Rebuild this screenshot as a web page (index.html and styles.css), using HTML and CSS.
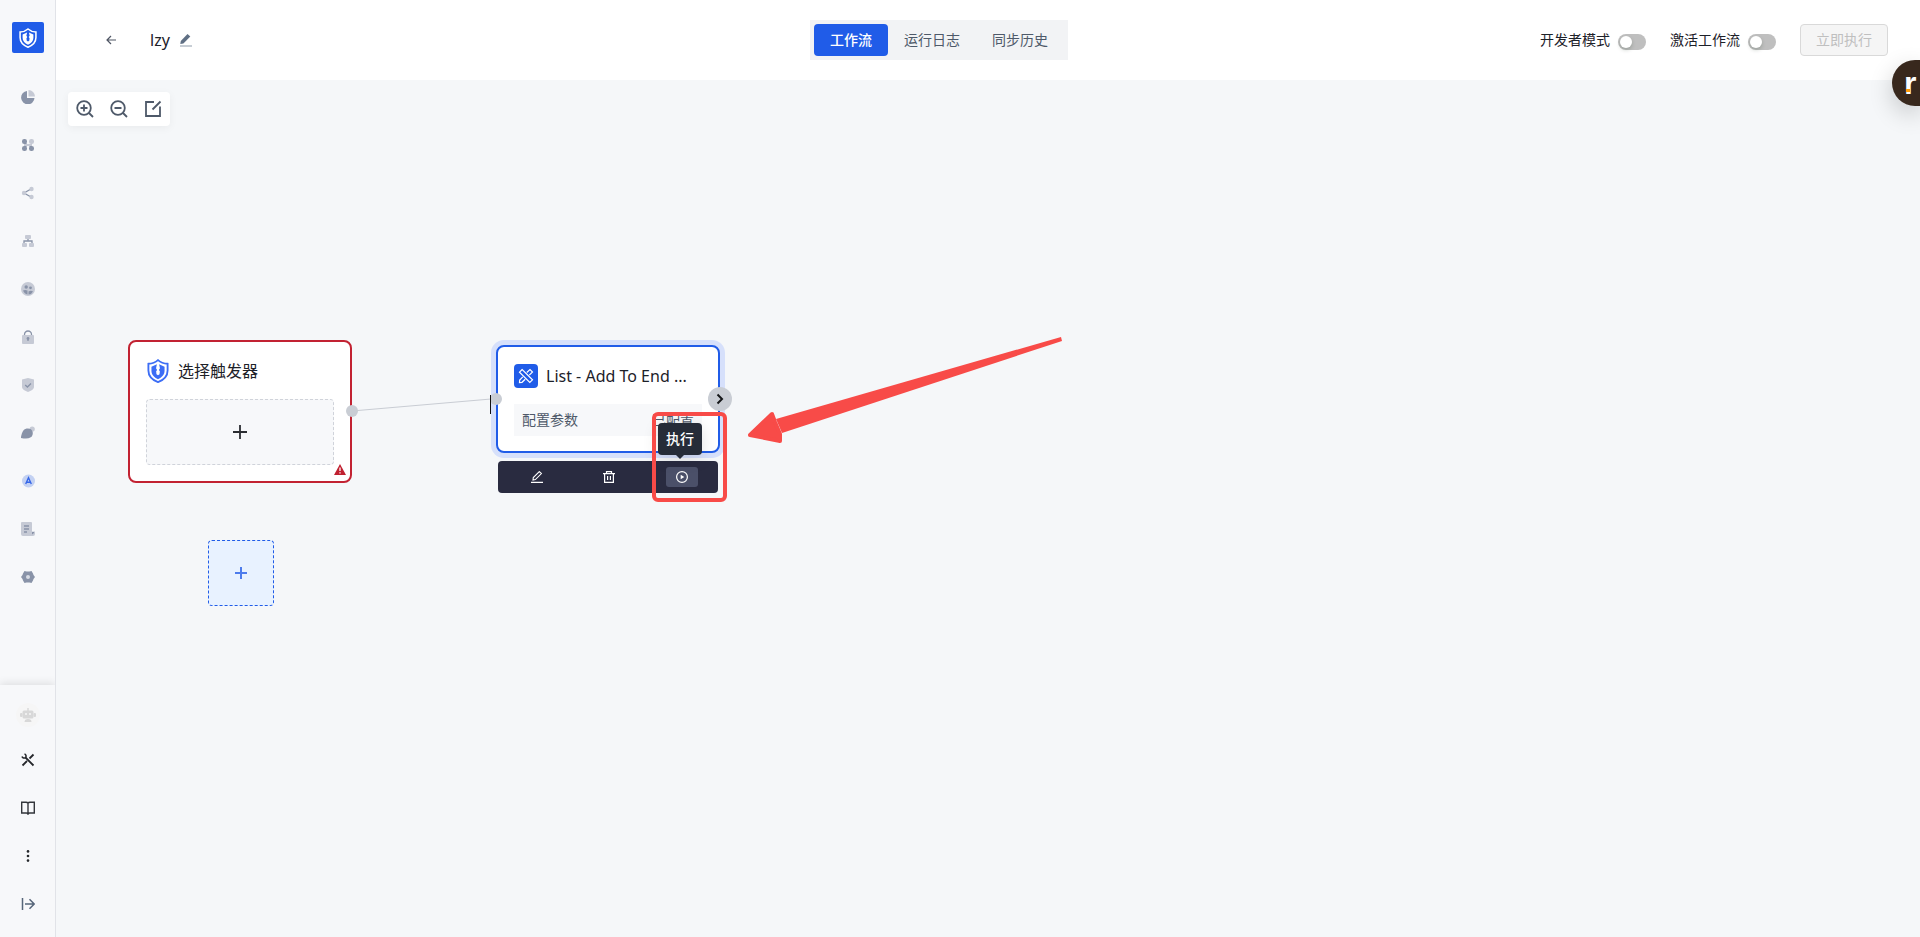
FILE: index.html
```html
<!DOCTYPE html>
<html lang="zh-CN">
<head>
<meta charset="utf-8">
<title>lzy - 工作流</title>
<link rel="stylesheet" href="styles.css">
</head>
<body>
<svg class="defs" aria-hidden="true">
  <symbol id="shield" viewBox="0 0 20 22">
    <path d="M10 1 C7.500 3.200 4.500 4.200 1.200 4.400 V10.500 C1.200 15.800 4.800 19.200 10 21.200 C15.200 19.200 18.800 15.800 18.800 10.500 V4.400 C15.500 4.200 12.500 3.200 10 1Z" fill="none" stroke="currentColor" stroke-width="1.700"/>
    <path d="M4 7.200 L9 4.800 L8.200 8.500 L9.200 10 L8.300 11.200 L8.600 14 L10 15 L11.400 14 L11.700 11.200 L10.800 10 L11.800 8.500 L11 4.800 L16 7.200 V11 C16 14.200 13.500 17 10 18.500 C6.500 17 4 14.200 4 11Z" fill="currentColor"/>
  </symbol>
</svg>
<div class="app">
  <aside class="sidebar">
    <a class="logo" href="#" aria-label="首页"><svg width="18" height="20"><use href="#shield"/></svg></a>
    <nav class="nav" aria-label="主导航">
      <a class="nav-item" href="#" aria-label="概览"><svg viewBox="0 0 14 14"><path class="dark" d="M6 1V8H13.500A6.700 6.700 0 1 1 6 1Z"/><path class="soft" d="M7.500 0A6.500 6.500 0 0 1 14 6.500H7.500Z"/></svg></a>
      <a class="nav-item" href="#" aria-label="应用"><svg viewBox="0 0 14 14"><path class="soft" d="M3 6h8v2H3z"/><rect class="dark" x="1" y="1" width="5" height="5" rx="2.200"/><rect class="soft" x="8" y="1" width="5" height="5" rx="2.200"/><rect class="dark" x="1" y="8" width="5" height="5" rx="2.200"/><rect class="dark" x="8" y="8" width="5" height="5" rx="2.200"/><path class="dark" d="M4 4l2 2H4zM4 10l2-2H4zM10 10L8 8h2z"/></svg></a>
      <a class="nav-item" href="#" aria-label="工作流"><svg viewBox="0 0 14 14"><path class="dark-line" d="M10 3L3 7l7 4"/><circle class="soft" cx="10.500" cy="3" r="2.200"/><circle class="soft" cx="3" cy="7" r="2.200"/><circle class="soft" cx="10.500" cy="11" r="2.200"/></svg></a>
      <a class="nav-item" href="#" aria-label="组织"><svg viewBox="0 0 14 14"><path class="dark-line" d="M7 5v2M3 10V7h8v3"/><rect class="soft" x="4" y="1" width="6" height="4" rx="1"/><rect class="soft" x="1" y="9" width="5" height="4" rx="1"/><rect class="soft" x="8" y="9" width="5" height="4" rx="1"/></svg></a>
      <a class="nav-item" href="#" aria-label="用户"><svg viewBox="0 0 14 14"><circle class="soft" cx="7" cy="7" r="7"/><circle class="dark" cx="5.200" cy="5" r="1.700"/><circle class="dark" cx="9.500" cy="5.800" r="1.400"/><path class="dark" d="M2 8.500Q4 7.500 6.500 8.500V12.500Q3.500 12 2 8.500ZM7.500 9.500Q10 8 12 9.500Q11 12 7.500 12.500Z"/></svg></a>
      <a class="nav-item" href="#" aria-label="权限"><svg viewBox="0 0 14 14"><path class="dark-line" d="M3.500 6V4.500a3.500 3.500 0 0 1 7 0V6"/><rect class="soft" x="1" y="5" width="12" height="9" rx="1"/><path class="dark-line" d="M7 11V8"/><circle class="dark" cx="7" cy="8.500" r="1.400"/></svg></a>
      <a class="nav-item" href="#" aria-label="安全"><svg viewBox="0 0 14 14"><path class="soft" d="M7 0l6 1.500v7.500c0 2-3 4-6 5c-3-1-6-3-6-5V1.500Z"/><path class="dark-line" d="M4.200 7l2.200 2L10 5.500"/></svg></a>
      <a class="nav-item" href="#" aria-label="品牌"><svg viewBox="0 0 14 14"><circle class="soft" cx="11.200" cy="3" r="2.600"/><path class="dark" d="M0 11C1 5 3 2.500 7 2.500C11 2.500 12.500 6 11.500 9C10.500 12 7 13.500 0 12Z"/></svg></a>
      <a class="nav-item" href="#" aria-label="自动化"><svg viewBox="0 0 14 14"><circle cx="7.500" cy="7" r="6.500" fill="#c3d1f2"/><path d="M4.700 10L7.500 3.800L10.300 10M5.500 8.200h4" fill="none" stroke="#3566e8" stroke-width="1.400"/></svg></a>
      <a class="nav-item" href="#" aria-label="日志"><svg viewBox="0 0 14 14"><path class="soft" d="M1 0h9q1 0 1 1v8.500h3V12q0 2-2 2H2q-2 0-2-2V1q0-1 1-1Z"/><path class="dark-line" d="M3 4h5M3 7h5M3 10h3"/><path class="dark" d="M11 10h2v1l-2 1.500Z"/></svg></a>
      <a class="nav-item" href="#" aria-label="设置"><svg viewBox="0 0 14 14"><path class="dark" d="M3.500 1L5.500 1.500h3l2-.5L12 3.500 12.500 5 14 7l-1.500 2L12 10.500 10.500 13l-2-.5h-3l-2 .5L2 10.500 1.500 9 0 7l1.500-2L2 3.500Z"/><circle cx="7" cy="7" r="2" fill="#d9dde5"/></svg></a>
    </nav>
    <div class="side-foot">
      <a class="robot" href="#" aria-label="助手"><svg viewBox="0 0 16 16"><path d="M8 1v3" stroke="#dadada" stroke-width="1.500"/><rect x="2.500" y="3.500" width="11" height="8" rx="1.500" fill="#d8d8d8"/><rect x="0" y="6" width="2.500" height="4" rx="1" fill="#d8d8d8"/><rect x="13.500" y="6" width="2.500" height="4" rx="1" fill="#d8d8d8"/><circle cx="6" cy="7" r="1" fill="#f7f7f7"/><circle cx="10" cy="7" r="1" fill="#f7f7f7"/><path d="M4.500 15q0-3 3.500-3t3.500 3Z" fill="#d8d8d8"/></svg></a>
      <a class="nav-item" href="#" aria-label="工具"><svg viewBox="0 0 14 14" fill="none" stroke="#25272b" stroke-width="1.800"><path d="M4.500 4.500L12.500 12.500M1.500 12.500L6 8M8.500 5.500L12.500 1.500"/><path d="M1 3.500A2.200 2.200 0 0 0 4.500 4.600A2.200 2.200 0 0 0 3.500 1" stroke-width="1.500"/></svg></a>
      <a class="nav-item" href="#" aria-label="文档"><svg viewBox="0 0 14 14" fill="none" stroke="#33363b" stroke-width="1.400"><path d="M7 2.200Q6.500 1.200 5 1.200H.7V12H5.500Q6.700 12 7 13.500Q7.300 12 8.500 12H13.300V1.200H9Q7.500 1.200 7 2.200ZM7 2V13"/></svg></a>
      <a class="nav-item" href="#" aria-label="更多"><svg viewBox="0 0 14 14" fill="#25272b"><circle cx="7" cy="2.400" r="1.300"/><circle cx="7" cy="7" r="1.300"/><circle cx="7" cy="11.600" r="1.300"/></svg></a>
      <a class="nav-item" href="#" aria-label="展开"><svg viewBox="0 0 14 14" fill="none" stroke="#566579" stroke-width="1.500"><path d="M1.500 1v12M4 7h9M8.500 2.200L13.200 7L8.500 11.800"/></svg></a>
    </div>
  </aside>
  <div class="page">
    <header class="header">
      <div class="heading">
        <button class="icon-btn back" aria-label="返回"><svg width="10" height="10" viewBox="0 0 10 10" fill="none" stroke="#4f5664" stroke-width="1.200"><path d="M10 5H1M5 1L1 5L5 9"/></svg></button>
        <h1>lzy</h1>
        <button class="icon-btn rename" aria-label="重命名"><svg width="12" height="14" viewBox="0 0 12 14"><path d="M.3 11L.8 8L7.500 1L10.300 3.600L3.400 10.600Z" fill="#5f6f84"/><path d="M0 13h12" stroke="#8f9cab"/></svg></button>
      </div>
      <div class="tabs" role="tablist">
        <button class="tab active" role="tab" aria-selected="true">工作流</button>
        <button class="tab" role="tab">运行日志</button>
        <button class="tab" role="tab">同步历史</button>
      </div>
      <div class="actions">
        <label>开发者模式<input class="switch" type="checkbox" role="switch"></label>
        <label>激活工作流<input class="switch" type="checkbox" role="switch"></label>
        <button class="run" disabled>立即执行</button>
      </div>
    </header>
    <main class="canvas">
      <div class="zoom-bar">
        <button class="icon-btn" aria-label="放大"><svg width="18" height="18" viewBox="0 0 18 18" fill="none" stroke="#4e5969" stroke-width="1.800"><circle cx="8" cy="8" r="6.800"/><path d="M13 13l4 4M4.500 8h7M8 4.500v7"/></svg></button>
        <button class="icon-btn" aria-label="缩小"><svg width="18" height="18" viewBox="0 0 18 18" fill="none" stroke="#4e5969" stroke-width="1.800"><circle cx="8" cy="8" r="6.800"/><path d="M13 13l4 4M4.500 8h7"/></svg></button>
        <button class="icon-btn" aria-label="适应画布"><svg width="18" height="18" viewBox="0 0 18 18" fill="none" stroke="#4e5969" stroke-width="1.800"><path d="M10 2H2V16H16V6.500M8.500 9.500L16.500 1.500"/></svg></button>
      </div>

      <svg class="edge" width="150" height="40"><path d="M6 21L145 9" stroke="#c9cdd4"/></svg>

      <section class="node trigger">
        <div class="node-title"><svg class="shield" width="24" height="24"><use href="#shield"/></svg><h2>选择触发器</h2></div>
        <button class="slot" aria-label="添加触发器"><svg width="16" height="16" viewBox="0 0 16 16" stroke="#2b2d31" stroke-width="1.800"><path d="M1 8h14M8 1v14"/></svg></button>
        <svg class="warn" width="12" height="11" viewBox="0 0 12 11"><path d="M6 0L12 11H0Z" fill="#c02030"/><path d="M6 3.500v3.500M6 8.200v1.300" stroke="#fff" stroke-width="1.300"/></svg>
        <i class="port out"></i>
      </section>

      <button class="add-node" aria-label="添加节点"><svg width="12" height="12" viewBox="0 0 12 12" stroke="#4d7cec" stroke-width="2"><path d="M0 6h12M6 0v12"/></svg></button>

      <section class="node list">
        <div class="node-title"><span class="tool-icon"><svg width="16" height="16" viewBox="0 0 16 16" fill="none" stroke="#fff" stroke-width="1.200"><path d="M8.800 4.500L12 1.500L14.500 4L11.300 7.200M7.200 11.300L4 14.300L1.500 14.500L1.700 12L4.800 8.800"/><path d="M4.200 1.500L1.500 4.200L11.800 14.500L14.500 11.800Z"/></svg></span><h2>List - Add To End ...</h2></div>
        <div class="param"><span>配置参数</span><span>已配置</span></div>
        <i class="port in"></i>
        <button class="next" aria-label="展开"><svg width="8" height="12" viewBox="0 0 8 12" fill="none" stroke="#15171a" stroke-width="2"><path d="M1.500 1.500L6 6L1.500 10.500"/></svg></button>
      </section>
      <i class="edge-end"></i>

      <div class="node-tools">
        <button aria-label="编辑"><svg width="12" height="12" viewBox="0 0 12 12" fill="none" stroke="#fff" stroke-width="1.100"><path d="M2 9L2.300 6.500L8.300.6L10.400 2.600L4.400 8.600ZM0 11.400h12"/></svg></button>
        <button aria-label="删除"><svg width="12" height="12" viewBox="0 0 12 12" fill="none" stroke="#fff" stroke-width="1.200"><path d="M0 2.600h12M3.500 2.600V.6h5v2M1.600 2.600v8.800h8.800V2.600M4.600 5v4M7.400 5v4"/></svg></button>
        <button class="on" aria-label="执行"><svg width="12" height="12" viewBox="0 0 12 12" fill="none" stroke="#fff" stroke-width="1.200"><circle cx="6" cy="6" r="5.400"/><path d="M4.700 3.800L8.300 6L4.700 8.200Z" fill="#fff" stroke="none"/></svg></button>
      </div>
      <div class="tooltip" role="tooltip">执行</div>
      <div class="highlight"></div>
      <svg class="pointer" width="320" height="112" viewBox="0 0 320 112"><path d="M30 84L315 2L316 6L36 98Z" fill="#f84b48"/><path d="M4 100L26 79L29 87L34 99L34 106Z" fill="#f84b48" stroke="#f84b48" stroke-width="4" stroke-linejoin="round"/></svg>
    </main>
  </div>
  <button class="badge" aria-label="r"><span>r</span></button>
</div>
</body>
</html>
```
FILE: styles.css
```css
* { box-sizing: border-box; }

body {
  margin: 0;
  color: #1d2129;
  font: 14px/22px "Noto Sans", "Noto Sans CJK SC", sans-serif;
}

button {
  padding: 0;
  border: 0;
  background: none;
  color: inherit;
  font: inherit;
  cursor: pointer;
}

h1, h2 { margin: 0; font-size: 16px; font-weight: 400; line-height: 24px; }
svg { display: block; }
.defs { position: absolute; width: 0; height: 0; }

.app { display: flex; min-height: 100vh; overflow: hidden; position: relative; }

.sidebar {
  display: flex;
  flex-direction: column;
  align-items: center;
  flex: 0 0 56px;
  padding-top: 22px;
  border-right: 1px solid #e1e3e8;
  background: #f7f8fa;
}
.logo {
  display: grid;
  place-items: center;
  width: 32px;
  height: 31px;
  border-radius: 2px;
  background: #205ce8;
  color: #fff;
}
.nav { display: flex; flex-direction: column; padding-top: 20px; }
.nav-item { display: grid; place-items: center; width: 48px; height: 48px; }
.nav-item svg { width: 14px; height: 14px; }
.soft { fill: #c6cad5; }
.dark { fill: #8993a8; }
.dark-line { fill: none; stroke: #8993a8; stroke-width: 1.3; }
.side-foot {
  display: flex;
  flex-direction: column;
  align-items: center;
  width: 100%;
  margin-top: auto;
  padding: 18px 0 9px;
  background: #f7f8fa;
  box-shadow: 0 -2px 8px #0000001a;
  clip-path: inset(-16px 0 0 0);
}
.robot {
  display: grid;
  place-items: center;
  width: 24px;
  height: 24px;
  margin-bottom: 9px;
  border-radius: 50%;
  background: #f6f6f6;
}
.robot svg { width: 16px; height: 16px; }

.page { display: flex; flex-direction: column; flex: 1; min-width: 0; }
.header {
  display: flex;
  align-items: center;
  justify-content: space-between;
  height: 80px;
  padding: 0 32px;
  background: #fff;
}
.heading { display: flex; align-items: center; width: 250px; }
.icon-btn { display: grid; place-items: center; }
.back { width: 46px; height: 32px; }
.heading h1 { padding-left: 16px; }
.rename { margin-left: 10px; }

.tabs { display: flex; padding: 4px; background: #f2f3f5; }
.tab { height: 32px; padding: 0 16px; border-radius: 4px; color: #4e5969; }
.tab.active { background: #205ce8; color: #fff; font-weight: 500; }

.actions { display: flex; align-items: center; gap: 24px; }
.actions label { display: flex; align-items: center; gap: 8px; }
.switch {
  appearance: none;
  width: 28px;
  height: 16px;
  margin: 4px 0 0;
  padding: 2px;
  border-radius: 8px;
  background: #bfbfbf;
}
.switch::before {
  content: "";
  display: block;
  width: 12px;
  height: 12px;
  border-radius: 50%;
  background: #fff;
  box-shadow: 0 2px 4px #00230b33;
}
.run {
  height: 32px;
  padding: 0 15px;
  border: 1px solid #d9d9d9;
  border-radius: 4px;
  background: #f5f5f5;
  color: #bfbfbf;
}

.canvas { position: relative; flex: 1; overflow: hidden; padding: 12px; background: #f5f7f9; }
.zoom-bar {
  display: flex;
  width: max-content;
  border-radius: 4px;
  background: #fff;
  box-shadow: 0 2px 8px #0000000d;
}
.zoom-bar .icon-btn { width: 34px; height: 34px; }

/* Nodes sit at free coordinates on the canvas */
.node {
  position: absolute;
  width: 224px;
  padding: 16px;
  border: 2px solid #205ce8;
  border-radius: 8px;
  background: #fff;
}
.trigger { left: 72px; top: 260px; padding-top: 17px; border-color: #c22232; }
.list { left: 440px; top: 265px; padding: 17px 16px 15px; box-shadow: 0 0 0 5px #d6e0fb; }
.node-title { display: flex; align-items: center; gap: 8px; height: 24px; }
.shield { color: #3c6df5; }
.slot {
  display: grid;
  place-items: center;
  width: 100%;
  height: 66px;
  margin-top: 16px;
  border: 1px dashed #d0d3da;
  border-radius: 4px;
  background: #f7f8fa;
}
.warn { position: absolute; right: 4px; bottom: 6px; }
.port {
  position: absolute;
  top: 63px;
  width: 12px;
  height: 12px;
  border-radius: 50%;
  background: #c9cdd4;
}
.port.out { right: -8px; }
.port.in { top: 46px; left: -8px; }
.tool-icon {
  display: grid;
  place-items: center;
  width: 24px;
  height: 24px;
  border-radius: 4px;
  background: #205ce8;
}
.param {
  display: flex;
  align-items: center;
  justify-content: space-between;
  height: 32px;
  margin-top: 16px;
  padding: 0 8px;
  background: #f7f8fa;
  color: #4e5969;
}
.next {
  position: absolute;
  top: 40px;
  right: -14px;
  display: grid;
  place-items: center;
  width: 24px;
  height: 24px;
  border-radius: 50%;
  background: #c9cdd4;
}
.edge { position: absolute; left: 290px; top: 310px; }
.edge-end { position: absolute; left: 434px; top: 315px; width: 1px; height: 19px; background: #111; }
.add-node {
  position: absolute;
  left: 152px;
  top: 460px;
  display: grid;
  place-items: center;
  width: 66px;
  height: 66px;
  border: 1px dashed #205ce8;
  border-radius: 4px;
  background: #e8f2ff;
}
.node-tools {
  position: absolute;
  left: 442px;
  top: 381px;
  display: flex;
  align-items: center;
  justify-content: space-around;
  width: 220px;
  height: 32px;
  padding-left: 3px;
  border-radius: 4px;
  background: #292b40;
}
.node-tools button {
  display: grid;
  place-items: center;
  width: 32px;
  height: 20px;
  border-radius: 3px;
}
.node-tools .on { background: #4b5069; }
.tooltip {
  position: absolute;
  left: 602px;
  top: 343px;
  padding: 5px 8px;
  border-radius: 4px;
  background: #262c38;
  box-shadow: 0 4px 16px #0000001f;
  color: #fff;
  font-weight: 500;
}
.tooltip::after {
  content: "";
  position: absolute;
  top: 100%;
  left: 50%;
  margin-left: -4px;
  border: 4px solid transparent;
  border-top-color: #262c38;
}
.highlight {
  position: absolute;
  left: 596px;
  top: 332px;
  width: 75px;
  height: 90px;
  border: 4px solid #f84b48;
  border-radius: 6px;
}
.pointer { position: absolute; left: 690px; top: 255px; }

.badge {
  position: absolute;
  top: 60px;
  right: 0;
  width: 28px;
  height: 46px;
  padding-left: 12px;
  border-radius: 23px 0 0 23px;
  background: #38281d;
  box-shadow: 0 8px 24px #00000033;
  color: #fff;
  font: 700 32px/42px "Liberation Sans", Arial, sans-serif;
  text-align: left;
}
.badge::after {
  content: "";
  position: absolute;
  left: 14px;
  top: 29px;
  width: 4px;
  height: 3px;
  background: #ff9d0a;
}
```
